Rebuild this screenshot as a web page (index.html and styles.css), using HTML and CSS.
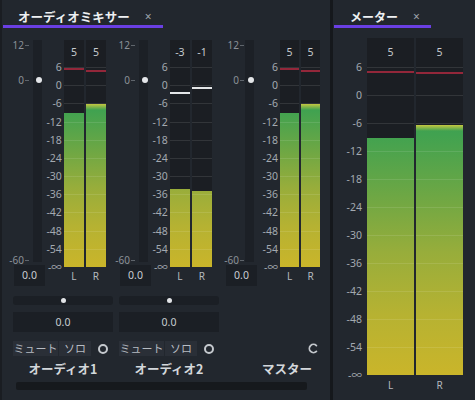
FILE: index.html
```html
<!DOCTYPE html>
<html lang="ja">
<head>
<meta charset="utf-8">
<link rel="stylesheet" href="styles.css">
</head>
<body>
<div class="app">
  <section class="mixer">
    <div class="tabbar"><div class="tab t-mixer">オーディオミキサー<span class="close">×</span></div></div>
    <div class="strips">
      <!-- Strip 1 -->
      <div class="strip">
        <div class="upper">
          <div class="fcol">
            <div class="fader">
              <div class="track"></div>
              <span class="tk tk12">12<i></i></span>
              <span class="tk tk0">0<i></i></span>
              <span class="tk tk60">-60<i></i></span>
              <div class="knob"></div>
            </div>
            <div class="val">0.0</div>
          </div>
          <div class="scale">
            <span>6</span><span>0</span><span>-6</span><span>-12</span><span>-18</span><span>-24</span><span>-30</span><span>-36</span><span>-42</span><span>-48</span><span>-54</span><span>-∞</span>
          </div>
          <div class="mcol">
            <div class="meter">
              <div class="mc"><div class="num">5</div><div class="plot"><div class="peak red" style="top:0.5px"></div><div class="fill" style="height:154px"></div></div></div>
              <div class="mc"><div class="num">5</div><div class="plot"><div class="peak red" style="top:2.5px"></div><div class="fill hl" style="height:163px"></div></div></div>
            </div>
            <div class="lr"><span>L</span><span>R</span></div>
          </div>
        </div>
        <div class="lower">
          <div class="pan"><span class="pdot"></span></div>
          <div class="val2">0.0</div>
          <div class="btns"><span class="b mute">ミュート</span><span class="b solo">ソロ</span><span class="ring"></span></div>
          <div class="name">オーディオ1</div>
        </div>
      </div>
      <!-- Strip 2 -->
      <div class="strip">
        <div class="upper">
          <div class="fcol">
            <div class="fader">
              <div class="track"></div>
              <span class="tk tk12">12<i></i></span>
              <span class="tk tk0">0<i></i></span>
              <span class="tk tk60">-60<i></i></span>
              <div class="knob"></div>
            </div>
            <div class="val">0.0</div>
          </div>
          <div class="scale">
            <span>6</span><span>0</span><span>-6</span><span>-12</span><span>-18</span><span>-24</span><span>-30</span><span>-36</span><span>-42</span><span>-48</span><span>-54</span><span>-∞</span>
          </div>
          <div class="mcol">
            <div class="meter">
              <div class="mc"><div class="num">-3</div><div class="plot"><div class="peak white" style="top:25.3px"></div><div class="fill" style="height:78px"></div></div></div>
              <div class="mc"><div class="num">-1</div><div class="plot"><div class="peak white" style="top:20.3px"></div><div class="fill" style="height:76px"></div></div></div>
            </div>
            <div class="lr"><span>L</span><span>R</span></div>
          </div>
        </div>
        <div class="lower">
          <div class="pan"><span class="pdot"></span></div>
          <div class="val2">0.0</div>
          <div class="btns"><span class="b mute">ミュート</span><span class="b solo">ソロ</span><span class="ring"></span></div>
          <div class="name">オーディオ2</div>
        </div>
      </div>
      <!-- Master -->
      <div class="strip master">
        <div class="upper">
          <div class="fcol">
            <div class="fader">
              <div class="track"></div>
              <span class="tk tk12">12<i></i></span>
              <span class="tk tk0">0<i></i></span>
              <span class="tk tk60">-60<i></i></span>
              <div class="knob"></div>
            </div>
            <div class="val">0.0</div>
          </div>
          <div class="scale">
            <span>6</span><span>0</span><span>-6</span><span>-12</span><span>-18</span><span>-24</span><span>-30</span><span>-36</span><span>-42</span><span>-48</span><span>-54</span><span>-∞</span>
          </div>
          <div class="mcol narrow">
            <div class="meter">
              <div class="mc"><div class="num">5</div><div class="plot"><div class="peak red" style="top:0.5px"></div><div class="fill" style="height:154px"></div></div></div>
              <div class="mc"><div class="num">5</div><div class="plot"><div class="peak red" style="top:2.7px"></div><div class="fill hl" style="height:163px"></div></div></div>
            </div>
            <div class="lr"><span>L</span><span>R</span></div>
          </div>
        </div>
        <div class="lower-m">
          <div class="btns-m">
            <svg class="cicon" width="11" height="11" viewBox="0 0 11 11"><path d="M8.4 2.6 A4.1 4.1 0 1 0 8.4 8.4" fill="none" stroke="#c3c7cc" stroke-width="1.8" stroke-linecap="round"/></svg>
          </div>
          <div class="name-m">マスター</div>
        </div>
      </div>
    </div>
    <div class="hscroll"></div>
  </section>
  <div class="divider"></div>
  <section class="mpanel">
    <div class="tabbar"><div class="tab t-meter">メーター<span class="close">×</span></div></div>
    <div class="rbody">
      <div class="scale rscale">
        <span>6</span><span>0</span><span>-6</span><span>-12</span><span>-18</span><span>-24</span><span>-30</span><span>-36</span><span>-42</span><span>-48</span><span>-54</span><span>-∞</span>
      </div>
      <div class="mcol rmcol">
        <div class="meter">
          <div class="mc"><div class="num">5</div><div class="plot"><div class="peak red" style="top:4px"></div><div class="fill" style="height:237px"></div></div></div>
          <div class="mc"><div class="num">5</div><div class="plot"><div class="peak red" style="top:5px"></div><div class="fill hl" style="height:250px"></div></div></div>
        </div>
        <div class="lr"><span>L</span><span>R</span></div>
      </div>
    </div>
  </section>
</div>
</body>
</html>
```

FILE: styles.css
```css
* { box-sizing: border-box; margin: 0; padding: 0; }
html, body { width: 475px; height: 400px; overflow: hidden; }
body {
  background: #15181c;
  font-family: "Noto Sans", "Noto Sans CJK JP", sans-serif;
  color: #c9cdd2;
}
.app { display: flex; height: 400px; }

.mixer {
  width: 330px;
  background: #22272e;
  box-shadow: inset 2px 0 0 #1a1d22;
  display: flex;
  flex-direction: column;
}
.divider { width: 3px; background: #15181c; }
.mpanel {
  flex: 1;
  background: #22272e;
  display: flex;
  flex-direction: column;
}

/* tabs */
.tabbar { height: 28px; display: flex; }
.tab {
  height: 28px;
  margin-left: 1px;
  padding-top: 7px;
  border-bottom: 3px solid #6a3fe3;
  display: flex;
  align-items: center;
  font-family: "Noto Sans CJK JP", sans-serif;
  font-weight: 700;
  font-size: 12.5px;
  color: #eef0f2;
  white-space: nowrap;
}
.t-mixer { margin-left: 3px; width: 160px; padding-left: 15px; }
.t-meter { width: 97px; padding-left: 16px; font-size: 12px; }
.close {
  margin-left: 15px;
  font-family: "Noto Sans", sans-serif;
  font-weight: 400;
  font-size: 12px;
  color: #9da3aa;
}

/* strips */
.strips {
  display: grid;
  grid-template-columns: 106px 106px 118px;
  padding-top: 12px;
}
.strip { display: flex; flex-direction: column; }
.upper { display: flex; height: 246px; }

.fcol { width: 48px; display: flex; flex-direction: column; }
.fader { position: relative; height: 222px; }
.track {
  position: absolute;
  left: 33px; top: 0;
  width: 9px; height: 222px;
  background: #1c2026;
}
.tk {
  position: absolute;
  right: 16px;
  font-size: 10px;
  line-height: 12px;
  color: #8b9198;
  display: flex;
  align-items: center;
  transform: translateY(-50%);
}
.tk i { display: block; width: 4px; height: 1px; background: #5f656c; margin-left: 1px; }
.tk12 { top: 5px; }
.tk0 { top: 40px; }
.tk60 { top: 220px; }
.knob {
  position: absolute;
  left: 35.5px; top: 37px;
  width: 6px; height: 6px;
  border-radius: 50%;
  background: #e4e6e9;
}
.val {
  margin: 3px 0 0 14px;
  width: 31px; height: 21px;
  background: #1b1f25;
  text-align: center;
  font-size: 10.5px;
  line-height: 21px;
  color: #c8ccd1;
}

.scale {
  width: 18px;
  margin-top: 21px;
  height: 212px;
  display: flex;
  flex-direction: column;
  justify-content: space-between;
  align-items: flex-end;
  margin-right: 2px;
}
.scale span {
  height: 12px;
  line-height: 12px;
  font-size: 10.5px;
  color: #a3a9b0;
  white-space: nowrap;
}

.mcol { width: 45px; display: flex; flex-direction: column; --ph: 200px; }
.mcol.narrow { width: 40px; }
.meter { display: flex; gap: 2px; height: 227px; }
.mc { flex: 1; display: flex; flex-direction: column; background: #1b1e23; }
.num {
  height: 27px;
  line-height: 24px;
  text-align: center;
  font-size: 10.5px;
  color: #c6cace;
}
.plot {
  position: relative;
  height: var(--ph);
  display: flex;
  flex-direction: column;
  justify-content: flex-end;
}
.plot::after {
  content: "";
  position: absolute;
  inset: 0;
  background: repeating-linear-gradient(to bottom, rgba(255,255,255,0.10) 0 1px, transparent 1px 18.1818px);
}
.fill {
  --grad: linear-gradient(to bottom, #2c9a58 0%, #41a250 22%, #6ea744 42%, #97ad3b 60%, #b6b232 80%, #cab52a 100%);
  background: var(--grad) bottom / 100% var(--ph) no-repeat;
}
.fill.hl {
  background: linear-gradient(to bottom, #c4c641, rgba(120,180,70,0)) top / 100% 6px no-repeat,
              var(--grad) bottom / 100% var(--ph) no-repeat;
}
.peak { position: absolute; left: 0; right: 0; height: 2px; z-index: 1; }
.peak.red { background: #93273a; }
.peak.white { background: #e3e5e7; }
.lr { display: flex; gap: 2px; height: 18px; }
.lr span {
  flex: 1;
  text-align: center;
  font-size: 10px;
  line-height: 18px;
  color: #b4b9bf;
}

/* lower controls */
.lower { margin-left: 13px; width: 100px; display: flex; flex-direction: column; }
.pan {
  margin-top: 10px;
  height: 9px;
  border-radius: 3px;
  background: #1b1f25;
  display: flex;
  align-items: center;
  justify-content: center;
}
.pdot { width: 5px; height: 5px; border-radius: 50%; background: #e2e4e7; }
.val2 {
  margin-top: 7px;
  height: 20px;
  background: #1b1f25;
  text-align: center;
  font-size: 10.5px;
  line-height: 20px;
  color: #c8ccd1;
}
.btns { margin-top: 9px; height: 15px; display: flex; align-items: center; }
.b {
  height: 15px;
  background: #2a2f37;
  font-family: "Noto Sans CJK JP", sans-serif;
  font-size: 11px;
  line-height: 15px;
  color: #b7bcc2;
  text-align: center;
  white-space: nowrap;
}
.mute { width: 45px; }
.solo { width: 32px; margin-left: 1px; }
.ring {
  margin-left: 7px;
  width: 10px; height: 10px;
  border: 2px solid #c5c9ce;
  border-radius: 50%;
}
.name {
  margin-top: 4px;
  height: 18px;
  line-height: 18px;
  text-align: center;
  font-family: "Noto Sans CJK JP", sans-serif;
  font-weight: 700;
  font-size: 12.5px;
  color: #d3d7db;
  white-space: nowrap;
}
.lower-m { display: flex; flex-direction: column; }
.btns-m {
  margin-top: 55px;
  height: 15px;
  display: flex;
  align-items: center;
  justify-content: flex-end;
  padding-right: 11px;
}
.name-m {
  margin-top: 4px;
  height: 18px;
  line-height: 18px;
  text-align: right;
  padding-right: 18px;
  font-family: "Noto Sans CJK JP", sans-serif;
  font-weight: 700;
  font-size: 12.5px;
  color: #d3d7db;
}
.hscroll {
  margin: 4px 0 0 16px;
  width: 291px;
  height: 8px;
  border-radius: 2px;
  background: #16191d;
}

/* right meter panel */
.rbody { display: flex; padding-top: 10px; }
.rscale { width: 29px; margin-top: 23px; height: 320px; margin-right: 5px; }
.rmcol { width: 96px; --ph: 308px; }
.rmcol .meter { height: 337px; }
.rmcol .num { height: 29px; line-height: 28px; }
.rmcol .plot::after {
  background: repeating-linear-gradient(to bottom, rgba(255,255,255,0.10) 0 1px, transparent 1px 28px);
}
.rmcol .lr { height: 20px; }
.rmcol .lr span { line-height: 20px; }
```
